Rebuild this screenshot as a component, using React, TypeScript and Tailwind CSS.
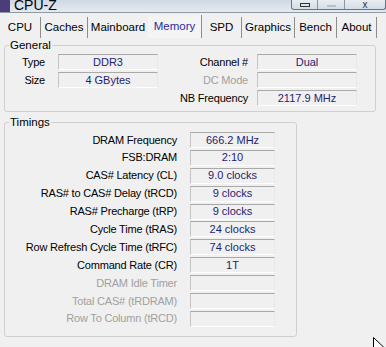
import React from "react";

const F = { fontFamily: '"Liberation Sans", Arial, sans-serif' };

function Box({ v, w }: { v?: string; w: string }) {
  return (
    <div
      className={`${w} h-[16px] border border-t-[#a9a9a9] border-l-[#c4c4c4] border-b-[#ffffff] border-r-[#e8e8e8] bg-[#f0f0f0] flex items-center justify-center text-[11px] leading-none text-[#1e1e70]`}
    >
      {v}
    </div>
  );
}

const tabs: { n: string; w: string; active?: boolean; noSep?: boolean }[] = [
  { n: "CPU", w: "w-[41px]" },
  { n: "Caches", w: "w-[47px]" },
  { n: "Mainboard", w: "w-[60px]", noSep: true },
  { n: "Memory", w: "w-[54px]", active: true },
  { n: "SPD", w: "w-[40px]" },
  { n: "Graphics", w: "w-[53px]" },
  { n: "Bench", w: "w-[42px]" },
  { n: "About", w: "w-[40px]" },
];

const timings: { l: string; v?: string; dis?: boolean }[] = [
  { l: "DRAM Frequency", v: "666.2 MHz" },
  { l: "FSB:DRAM", v: "2:10" },
  { l: "CAS# Latency (CL)", v: "9.0 clocks" },
  { l: "RAS# to CAS# Delay (tRCD)", v: "9 clocks" },
  { l: "RAS# Precharge (tRP)", v: "9 clocks" },
  { l: "Cycle Time (tRAS)", v: "24 clocks" },
  { l: "Row Refresh Cycle Time (tRFC)", v: "74 clocks" },
  { l: "Command Rate (CR)", v: "1T" },
  { l: "DRAM Idle Timer", dis: true },
  { l: "Total CAS# (tRDRAM)", dis: true },
  { l: "Row To Column (tRCD)", dis: true },
];

const lab = "text-right text-[11px] leading-none tracking-[-0.2px]";

export default function App() {
  return (
    <div
      style={F}
      className="w-[386px] h-[347px] bg-[#f0f0f0] overflow-hidden flex flex-col relative text-[11px] text-black"
    >
      {/* title bar */}
      <div className="h-[13px] shrink-0 overflow-hidden bg-gradient-to-b from-[#cfd9e4] to-[#e4eaf0] border-b border-[#8e9aa6] flex items-end justify-between">
        <div className="flex items-end gap-[4px] mb-[-1px]">
          <div className="w-[10px] h-[14px] bg-[#4a3d7a] rounded-[1px]" />
          <span className="text-[14px] leading-[16px] text-black">CPU-Z</span>
        </div>
        <div className="flex h-[10px] self-start border border-t-0 border-[#6b7682] rounded-b-[3px] overflow-hidden bg-gradient-to-b from-[#e8edf2] to-[#d5dde5]">
          <div className="w-[26px] border-r border-[#8a96a2] flex items-end justify-center">
            <div className="w-[10px] h-[4px] border border-[#333] mb-[2px]" />
          </div>
          <div className="w-[27px] border-r border-[#8a96a2] flex items-end justify-center">
            <div className="w-[9px] h-[2px] bg-[#b8c0c8] mb-[2px]" />
          </div>
          <div className="w-[40px] flex items-end justify-center">
            <span className="text-[10px] leading-[10px] text-[#333] mb-[-1px]">x</span>
          </div>
        </div>
      </div>

      {/* tabs */}
      <div className="h-[25px] shrink-0 flex items-end">
        {tabs.map((t) => (
          <div
            key={t.n}
            className={`${t.w} flex items-center justify-center ${
              t.noSep ? "" : "border-r border-[#8c8c8c]"
            } ${t.active ? "text-[#2a2a9c] bg-[#f4f4f4] h-[23px]" : "h-[21px]"}`}
          >
            <span className="text-[11.5px] leading-none">{t.n}</span>
          </div>
        ))}
      </div>

      {/* General */}
      <fieldset className="mx-[4px] mt-[1px] w-[372px] border border-[#cfcfcf] rounded-[3px] pt-[2px] pb-[5px]">
        <legend className="ml-[4px] px-[1px] text-[11.5px] leading-[13px]">General</legend>
        <div className="flex flex-col gap-[2px]">
          <div className="flex items-center h-[16px]">
            <div className={`w-[40px] ${lab}`}>Type</div>
            <div className="w-[13px]" />
            <Box w="w-[100px]" v="DDR3" />
            <div className={`w-[90px] ${lab}`}>Channel #</div>
            <div className="w-[9px]" />
            <Box w="w-[100px]" v="Dual" />
          </div>
          <div className="flex items-center h-[16px]">
            <div className={`w-[40px] ${lab}`}>Size</div>
            <div className="w-[13px]" />
            <Box w="w-[100px]" v="4 GBytes" />
            <div className={`w-[90px] ${lab} text-[#a0a0a0]`}>DC Mode</div>
            <div className="w-[9px]" />
            <Box w="w-[100px]" />
          </div>
          <div className="flex items-center h-[16px]">
            <div className="w-[153px]" />
            <div className={`w-[90px] ${lab}`}>NB Frequency</div>
            <div className="w-[9px]" />
            <Box w="w-[100px]" v="2117.9 MHz" />
          </div>
        </div>
      </fieldset>

      {/* Timings */}
      <fieldset className="mx-[4px] mt-[4px] w-[293px] border border-[#cfcfcf] rounded-[3px] pt-[3px] pb-[9px]">
        <legend className="ml-[4px] px-[1px] text-[11.5px] leading-[13px]">Timings</legend>
        <div className="flex flex-col gap-[1.9px]">
          {timings.map((r) => (
            <div key={r.l} className="flex items-center h-[16px]">
              <div className={`w-[172px] ${lab} ${r.dis ? "text-[#a0a0a0]" : ""}`}>{r.l}</div>
              <div className="w-[13px]" />
              <Box w="w-[85px]" v={r.v} />
            </div>
          ))}
        </div>
      </fieldset>

      {/* mouse cursor */}
      <svg className="absolute left-[373px] top-[337px]" width="13" height="10" viewBox="0 0 13 10">
        <path d="M0.5 0.5 L0.5 16 L4.5 12 L7.5 18 L9.5 17 L6.5 11 L11.5 11 Z" fill="#fff" stroke="#000" strokeWidth="1" />
      </svg>
    </div>
  );
}
